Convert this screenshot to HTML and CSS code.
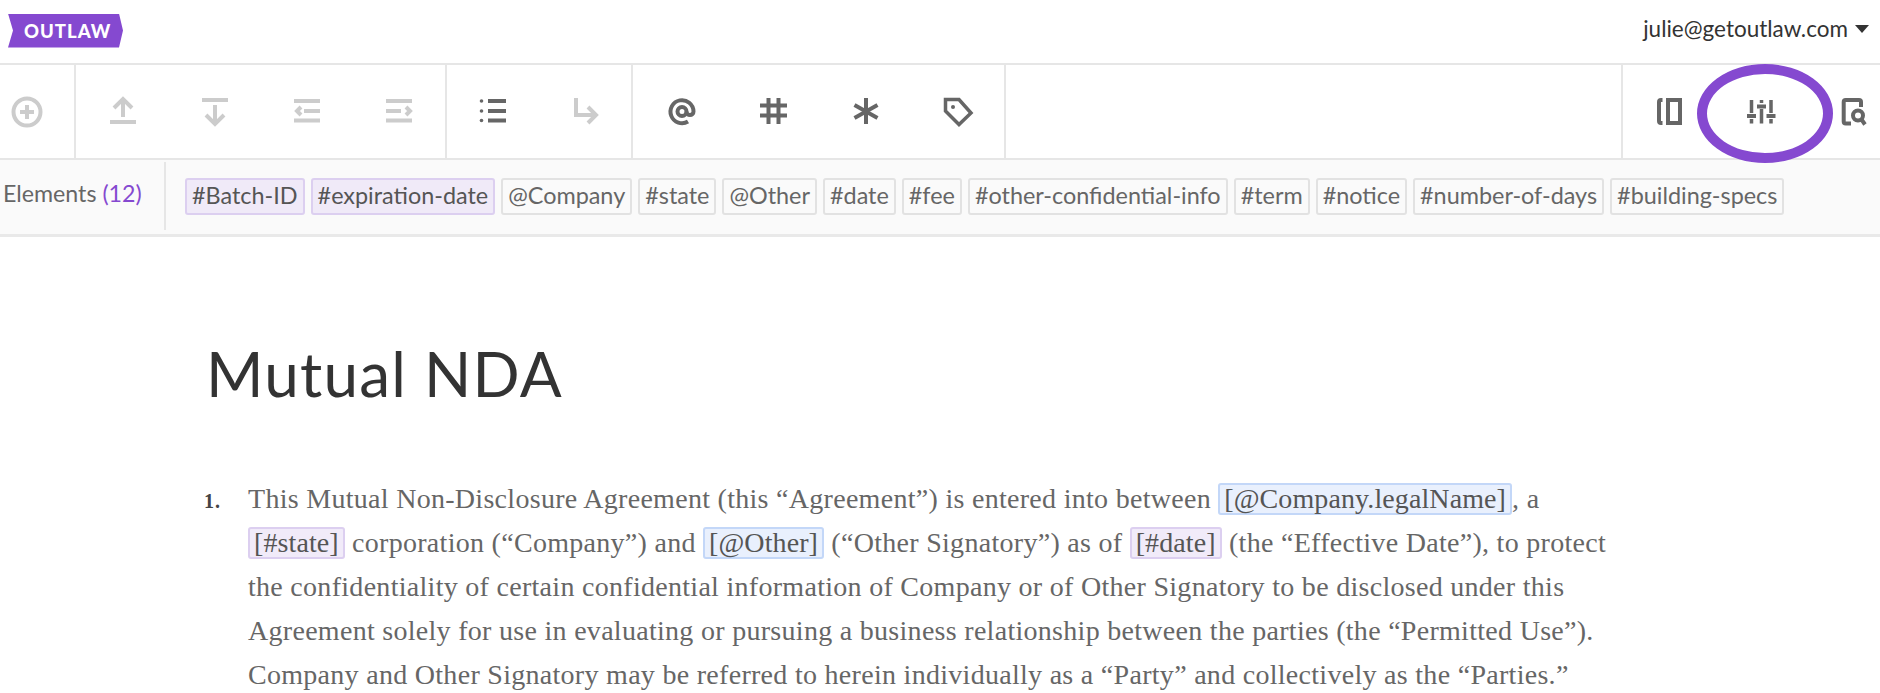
FILE: index.html
```html
<!DOCTYPE html>
<html lang="en">
<head>
  <meta charset="UTF-8">
  <title>Mutual NDA</title>
  <link rel="stylesheet" href="styles.css">
</head>
<body>
  <header class="topbar">
    <div class="logo"><span>OUTLAW</span></div>
    <div class="user">julie@getoutlaw.com <i class="caret"></i></div>
  </header>

  <div class="toolbar">
    <div class="tool-group first">
      <button class="tool off"><svg viewBox="0 0 32 32"><circle cx="16" cy="16" r="13.5"/><path d="M16 9v14M9 16h14"/></svg></button>
    </div>
    <div class="tool-group move-tools">
      <button class="tool off"><svg viewBox="0 0 32 32"><path d="M16 4v17M7 12l9-9 9 9M3 26h26"/></svg></button>
      <button class="tool off"><svg viewBox="0 0 32 32"><path d="M16 9v18M7 19l9 9 9-9M3 4h26"/></svg></button>
      <button class="tool off"><svg viewBox="0 0 32 32"><path d="M3 5h26M13 15h16M3 24.500h26M10 11l-4 4 4 4"/></svg></button>
      <button class="tool off"><svg viewBox="0 0 32 32"><path d="M3 5h26M3 15h15M3 24.500h26M23 11l4 4-4 4"/></svg></button>
    </div>
    <div class="tool-group">
      <button class="tool"><svg viewBox="0 0 32 32"><path d="M11 5h18M11 15h18M11 24.500h18"/><circle class="dot" cx="4.500" cy="5" r="1.800"/><circle class="dot" cx="4.500" cy="15" r="1.800"/><circle class="dot" cx="4.500" cy="24.500" r="1.800"/></svg></button>
      <button class="tool off"><svg viewBox="0 0 32 32"><path d="M7 2v17h19M19 11l8 8-8 8"/></svg></button>
    </div>
    <div class="tool-group tags-tools">
      <button class="tool"><svg viewBox="0 0 32 32"><path d="M22 25.500A11.500 11.500 0 1 1 27.500 15.500a3.500 3.500 0 0 1-7 0"/><circle cx="16" cy="15.500" r="4.500"/></svg></button>
      <button class="tool"><svg viewBox="0 0 32 32"><path d="M10.500 2v26M20.500 2v26M2 9.500h27M2 19.500h27"/></svg></button>
      <button class="tool"><svg viewBox="0 0 32 32"><path d="M16 2v26M4.500 9l23 13M27.500 9l-23 13"/></svg></button>
      <button class="tool"><svg viewBox="0 0 32 32"><path class="thin" d="M3.500 3.500H17L29 17 17 28.500 3.500 15z"/><circle class="dot" cx="11" cy="11" r="2"/></svg></button>
    </div>
    <div class="tool-group right">
      <button class="tool"><svg viewBox="0 0 32 32"><rect x="15" y="4" width="12" height="23"/><path d="M9.500 4H8a2 2 0 0 0-2 2v19a2 2 0 0 0 2 2h1.500"/></svg></button>
      <button class="tool"><svg viewBox="0 0 32 32"><path class="thin" d="M6.500 4v13M6.500 23v4.500M16.500 4v3M16.500 13v14.500M26 4v13M26 23v4.500"/><path d="M2 20h9M12 10.500h9M21.500 20h9"/></svg></button>
      <button class="tool"><svg viewBox="0 0 32 32"><path d="M14 27.500H8.700a2 2 0 0 1-2-2V6a2 2 0 0 1 2-2H22a2 2 0 0 1 2 2v5"/><circle cx="21" cy="19.500" r="5"/><path d="M24.500 23.500l3.500 5"/></svg></button>
      <div class="ring"></div>
    </div>
  </div>

  <div class="elements">
    <div class="elements-label">Elements <span class="count">(12)</span></div>
    <div class="tags">
      <span class="tag hash">#Batch-ID</span>
      <span class="tag hash">#expiration-date</span>
      <span class="tag">@Company</span>
      <span class="tag">#state</span>
      <span class="tag">@Other</span>
      <span class="tag">#date</span>
      <span class="tag">#fee</span>
      <span class="tag">#other-confidential-info</span>
      <span class="tag">#term</span>
      <span class="tag">#notice</span>
      <span class="tag">#number-of-days</span>
      <span class="tag">#building-specs</span>
    </div>
  </div>

  <main class="doc">
    <h1>Mutual NDA</h1>
    <ol class="clauses">
      <li>
        <span class="num">1.</span>
        <div class="clause-text">This Mutual Non-Disclosure Agreement (this “Agreement”) is entered into between <span class="var at">[@Company.legalName]</span>, a <span class="var hash">[#state]</span> corporation (“Company”) and <span class="var at">[@Other]</span> (“Other Signatory”) as of <span class="var hash">[#date]</span> (the “Effective Date”), to protect the confidentiality of certain confidential information of Company or of Other Signatory to be disclosed under this Agreement solely for use in evaluating or pursuing a business relationship between the parties (the “Permitted Use”). Company and Other Signatory may be referred to herein individually as a “Party” and collectively as the “Parties.”</div>
      </li>
    </ol>
  </main>
</body>
</html>
```

FILE: styles.css
```css
* { box-sizing: border-box; }
html, body {
  height: 100%;
  overflow: hidden;
}
body {
  margin: 0;
  background: #fff;
  color: #333;
  font-family: Lato, "Open Sans", sans-serif;
}
.topbar {
  display: flex;
  justify-content: space-between;
  align-items: center;
  height: 65px;
  padding: 0 11px 2px 8px;
  border-bottom: 2px solid #e6e6e6;
}
.logo {
  width: 115px;
  height: 34px;
  background: #8549d0;
  clip-path: polygon(0 0, 111px 0, 100% 50%, 111px 100%, 0 100%, 5px 50%);
  display: flex;
  align-items: center;
  padding-left: 16px;
  color: #fff;
  font-size: 18.5px;
  font-weight: 900;
  letter-spacing: 1px;
}
.user {
  margin-bottom: 4px;
  font-size: 22.5px;
  display: flex;
  align-items: center;
  gap: 7px;
}
.caret {
  border: 7px solid transparent;
  border-top: 8px solid #333;
  border-bottom: 0;
}
.toolbar {
  display: flex;
  height: 95px;
  border-bottom: 2px solid #e6e6e6;
}
.tool-group {
  display: flex;
  flex: none;
  border-right: 2px solid #e6e6e6;
}
.tool-group.first { width: 76px; }
.tool-group.first .tool {
  width: 100%;
  padding-right: 21px;
}
.tool-group.move-tools { padding-left: 1px; }
.tool-group.tags-tools { padding-left: 3px; }
.tool-group.right {
  position: relative;
  margin-left: auto;
  border-right: 0;
  border-left: 2px solid #e6e6e6;
  margin-right: -19px;
}
.tool {
  width: 92px;
  border: 0;
  padding: 0;
  background: none;
  color: #666;
  display: flex;
  align-items: center;
  justify-content: center;
}
.tool.off { color: #ccc; }
.tool svg {
  width: 32px;
  height: 32px;
  fill: none;
  stroke: currentColor;
  stroke-width: 4;
}
.tool svg .thin { stroke-width: 3.5; }
.tool svg .dot {
  fill: currentColor;
  stroke: none;
}
.ring {
  position: absolute;
  left: 74px;
  top: -1px;
  width: 136px;
  height: 99px;
  border: 10px solid #8549d0;
  border-radius: 50%;
}
.elements {
  display: flex;
  align-items: center;
  height: 77px;
  padding-bottom: 2px;
  background: #fafafa;
  border-bottom: 3px solid #e9e9e9;
}
.elements-label {
  flex: none;
  width: 166px;
  height: 68px;
  padding-left: 3px;
  font-size: 23.2px;
  line-height: 63px;
  color: #666;
  border-right: 2px solid #e6e6e6;
}
.count { color: #8549d0; }
.tags {
  display: flex;
  gap: 6px;
  padding-left: 19px;
}
.tag {
  height: 37px;
  padding: 0 5px;
  font-size: 23.4px;
  line-height: 30px;
  color: #666;
  background: #fafafa;
  border: 2px solid #e2e2e2;
  border-radius: 3px;
}
.tag.hash {
  background: #f0eaf8;
  border-color: #dccff0;
  color: #555;
}
.doc {
  padding: 0 0 0 206px;
}
h1 {
  margin: 0;
  padding-top: 99px;
  font-size: 62px;
  font-weight: 400;
  letter-spacing: 1.2px;
  line-height: 74px;
  color: #333;
}
.clauses {
  margin: 67px 0 0;
  padding: 0;
  list-style: none;
  font-family: "Liberation Serif", serif;
}
.clauses li {
  display: flex;
  align-items: baseline;
  font-size: 28px;
  line-height: 44px;
  letter-spacing: 0.29px;
  color: #666;
}
.num {
  flex: none;
  width: 44px;
  margin-left: -2px;
  font-size: 20px;
  font-weight: 700;
  letter-spacing: 1px;
  color: #444;
}
.clause-text { width: 1367px; }
.var {
  display: inline-block;
  padding: 0 4px;
  line-height: 28px;
  letter-spacing: 0.1px;
  color: #555;
  border: 2px solid;
  border-radius: 3px;
}
.var.at {
  background: #e9f0fd;
  border-color: #c3d7f8;
}
.var.hash {
  background: #f1ebf9;
  border-color: #dccff0;
}
```
